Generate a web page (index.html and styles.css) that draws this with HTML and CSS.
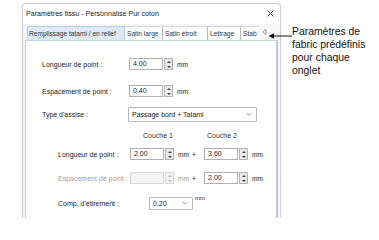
FILE: index.html
```html
<!DOCTYPE html>
<html lang="fr">
<head>
<meta charset="utf-8">
<title>Paramètres tissu</title>
<link rel="stylesheet" href="styles.css">
</head>
<body>
<div class="stage">
  <div class="dialog">
    <div class="titlebar">
      <span class="title">Paramètres tissu - Personnalisé Pur coton</span>
      <svg class="close" width="7" height="7" viewBox="0 0 7 7"><path d="M0.5 0.5L6.5 6.5M6.5 0.5L0.5 6.5" stroke="#333" stroke-width="0.9" fill="none"/></svg>
    </div>
    <div class="tabs">
      <div class="tab active">Remplissage tatami / en relief</div>
      <div class="tab w-large">Satin large</div>
      <div class="tab w-etroit">Satin étroit</div>
      <div class="tab w-lettrage">Lettrage</div>
      <div class="tab w-stab">Stab</div>
      <svg class="tabscroll" width="5" height="6" viewBox="0 0 5 6"><path d="M4 0.5L0.8 3L4 5.5Z" fill="none" stroke="#8a8a8a" stroke-width="0.8"/></svg>
    </div>
    <div class="panel">
      <div class="row r-a">
        <span class="label lw-main">Longueur de point :</span>
        <span class="input">4.00</span>
        <span class="spin"><i class="up"></i><i class="down"></i></span>
        <span class="unit">mm</span>
      </div>
      <div class="row r-b">
        <span class="label lw-main">Espacement de point :</span>
        <span class="input">0.40</span>
        <span class="spin"><i class="up"></i><i class="down"></i></span>
        <span class="unit">mm</span>
      </div>
      <div class="row r-c">
        <span class="label lw-type">Type d'assise :</span>
        <span class="combo wide">Passage bord + Tatami<svg class="chev" width="6" height="4" viewBox="0 0 6 4"><path d="M0.5 0.8L3 3.2L5.5 0.8" fill="none" stroke="#888" stroke-width="0.8"/></svg></span>
      </div>
      <div class="row r-head">
        <span class="head h1">Couche 1</span>
        <span class="head">Couche 2</span>
      </div>
      <div class="row r-d">
        <span class="label lw-sub">Longueur de point :</span>
        <span class="input">2.00</span>
        <span class="spin"><i class="up"></i><i class="down"></i></span>
        <span class="unit">mm</span>
        <span class="plus">+</span>
        <span class="input">3.60</span>
        <span class="spin"><i class="up"></i><i class="down"></i></span>
        <span class="unit">mm</span>
      </div>
      <div class="row r-e">
        <span class="label lw-sub disabled">Espacement de point :</span>
        <span class="input off"></span>
        <span class="spin off"><i class="up"></i><i class="down"></i></span>
        <span class="unit disabled">mm</span>
        <span class="plus">+</span>
        <span class="input">2.00</span>
        <span class="spin"><i class="up"></i><i class="down"></i></span>
        <span class="unit">mm</span>
      </div>
      <div class="row r-f">
        <span class="label lw-comp">Comp. d'étirement :</span>
        <span class="combo small">0.20<svg class="chev" width="6" height="4" viewBox="0 0 6 4"><path d="M0.5 0.8L3 3.2L5.5 0.8" fill="none" stroke="#888" stroke-width="0.8"/></svg></span>
        <span class="unit raised">mm</span>
      </div>
    </div>
  </div>
  <svg class="callout-arrow" width="24" height="8" viewBox="0 0 24 8"><path d="M0.5 4L6 1.2L6 6.8Z" fill="#111"/><path d="M5 4H24" stroke="#111" stroke-width="1"/></svg>
  <div class="callout">Paramètres de<br>fabric prédéfinis<br>pour chaque<br>onglet</div>
</div>
</body>
</html>
```

FILE: styles.css
```css
html, body {
  margin: 0;
  padding: 0;
  background: #ffffff;
}
body {
  width: 379px;
  height: 218px;
  overflow: hidden;
  font-family: "Liberation Sans", Arial, sans-serif;
  color: #1b1b1b;
}
.stage {
  position: relative;
  width: 379px;
  height: 218px;
}
.dialog {
  margin: 3px 0 0 22px;
  width: 259px;
  height: 220px;
  box-sizing: border-box;
  border: 1px solid #cfcfcf;
  border-bottom: none;
  border-radius: 4px 4px 0 0;
  background: #f6f6f6;
  box-shadow: 0 0 2px rgba(0,0,0,0.08);
}
.titlebar {
  height: 20px;
  display: flex;
  align-items: center;
  justify-content: space-between;
  padding: 0 6px 0 3px;
  background: #ffffff;
  border-radius: 4px 4px 0 0;
}
.title {
  font-size: 7.1px;
  color: #222;
}
.close {
  display: block;
  margin-top: -1px;
}
.tabs {
  display: flex;
  align-items: stretch;
  height: 14px;
  margin-top: 2px;
  padding-left: 4px;
}
.tab {
  box-sizing: border-box;
  font-size: 6.6px;
  line-height: 13px;
  padding-left: 2px;
  white-space: nowrap;
  background: #ffffff;
  border-top: 1px solid #d6d6d6;
  border-right: 1px solid #b8b8b8;
  color: #333;
}
.tab.active {
  width: 98px;
  background: #dfeaf6;
  border: 1px solid #b6cde4;
  border-bottom: none;
  padding-left: 1px;
}
.w-large { width: 38px; }
.w-etroit { width: 45px; }
.w-lettrage { width: 33px; }
.w-stab { width: 18px; border-right: none; }
.tabscroll {
  display: block;
  margin: 3px 0 0 3px;
}
.panel {
  box-sizing: border-box;
  margin-left: 2px;
  width: 253px;
  height: 190px;
  background: #ffffff;
  border: 1px solid #c4d4e4;
  border-right: 2px solid #b9c9d9;
  padding-top: 16px;
}
.row {
  display: flex;
  align-items: center;
  height: 14px;
  font-size: 7px;
}
.r-a { padding-left: 16px; }
.r-b { padding-left: 16px; margin-top: 13px; }
.r-c { padding-left: 16px; margin-top: 8px; height: 16px; }
.r-head { padding-left: 117px; margin-top: 8px; height: 10px; }
.r-d { padding-left: 32px; margin-top: 7px; }
.r-e { padding-left: 32px; margin-top: 10px; }
.r-f { padding-left: 32px; margin-top: 11px; }
.label { white-space: nowrap; }
.lw-main { width: 87px; }
.lw-type { width: 86px; }
.lw-sub { width: 72px; }
.lw-comp { width: 91px; }
.disabled { color: #a2a2a2; }
.head { color: #333; }
.h1 { width: 64px; }
.input {
  box-sizing: border-box;
  width: 34px;
  height: 12px;
  border: 1px solid #b0b0b0;
  background: #ffffff;
  padding-left: 3px;
  line-height: 10px;
  font-size: 7px;
}
.input.off {
  background: #f3f3f3;
  border-color: #d6d6d6;
}
.spin {
  box-sizing: border-box;
  width: 9px;
  height: 12px;
  margin-left: 1px;
  border: 1px solid #b3b3b3;
  background: #e9e9e9;
  display: flex;
  flex-direction: column;
  align-items: center;
  justify-content: space-around;
}
.spin.off {
  border-color: #d8d8d8;
  background: #f3f3f3;
}
.spin i {
  display: block;
  width: 0;
  height: 0;
  border-left: 2px solid transparent;
  border-right: 2px solid transparent;
}
.spin .up { border-bottom: 2px solid #444; }
.spin .down { border-top: 2px solid #444; }
.spin.off .up { border-bottom-color: #b5b5b5; }
.spin.off .down { border-top-color: #b5b5b5; }
.unit {
  margin-left: 4px;
  font-size: 6.6px;
}
.unit.raised {
  margin-left: 2px;
  align-self: flex-start;
  margin-top: -1px;
  font-size: 6px;
}
.plus {
  margin-left: 3px;
  margin-right: 8px;
  font-size: 7px;
}
.combo {
  box-sizing: border-box;
  display: flex;
  align-items: center;
  justify-content: space-between;
  background: #ffffff;
  border: 1px solid #b8b8b8;
  border-radius: 1px;
  font-size: 7px;
  padding: 0 4px 0 3px;
}
.combo.wide {
  width: 129px;
  height: 15px;
}
.combo.small {
  width: 44px;
  height: 13px;
}
.chev { display: block; }
.callout-arrow {
  position: absolute;
  left: 268px;
  top: 29px;
}
.callout {
  position: absolute;
  left: 292px;
  top: 22px;
  font-size: 10.4px;
  line-height: 13px;
  color: #111;
}
```
